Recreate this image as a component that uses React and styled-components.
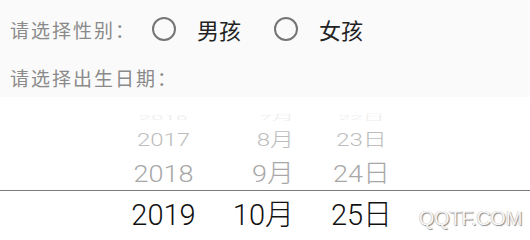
import React from "react";
import styled, { createGlobalStyle } from "styled-components";

const GlobalStyle = createGlobalStyle`
  html, body {
    margin: 0;
    padding: 0;
    background: #ffffff;
  }
  body {
    font-family: Roboto, "Noto Sans CJK SC", sans-serif;
  }
`;

const Screen = styled.div`
  width: 530px;
  height: 240px;
  overflow: hidden;
  position: relative;
`;

const Form = styled.div`
  background: #fafafa;
  padding: 0 10px;
  display: flex;
  flex-direction: column;
`;

const Row = styled.div`
  height: ${({ h }) => h}px;
  display: flex;
  align-items: center;
`;

const Label = styled.span`
  font-size: 19px;
  letter-spacing: 2px;
  color: #8a8a8a;
  white-space: nowrap;
`;

const RadioGroup = styled.div`
  display: flex;
  align-items: center;
  gap: 33px;
  margin-left: 16px;
`;

const RadioOption = styled.label`
  display: flex;
  align-items: center;
  gap: 21px;
  font-size: 22px;
  color: #222;
  cursor: pointer;
`;

const Circle = styled.span`
  width: 24px;
  height: 24px;
  box-sizing: border-box;
  border: 2.5px solid #757575;
  border-radius: 50%;
`;

const Picker = styled.div`
  position: relative;
  height: 143px;
  background: #ffffff;
  overflow: hidden;
  display: flex;
  padding-left: 114px;
`;

const Column = styled.div`
  width: 99px;
  display: flex;
  flex-direction: column;
  padding-top: 13px;
  align-items: ${({ align }) => (align === "right" ? "flex-end" : "center")};
  padding-right: ${({ align }) => (align === "right" ? "18px" : "0")};
  box-sizing: border-box;
`;

const Item = styled.div`
  height: ${({ h }) => h}px;
  line-height: ${({ h }) => h}px;
  font-size: ${({ size }) => size}px;
  font-weight: 300;
  color: ${({ color }) => color};
  transform: scaleY(${({ sy }) => sy});
  white-space: nowrap;
`;

const Divider = styled.div`
  position: absolute;
  left: 0;
  right: 0;
  top: 93px;
  height: 1px;
  background: #7a7a7a;
`;

const Watermark = styled.div`
  position: absolute;
  right: 8px;
  bottom: 10px;
  font-family: "Liberation Sans", Arial, sans-serif;
  font-size: 20px;
  color: #f6f6f6;
  text-shadow: 1px 1px 1px #8a8a8a, -0.5px -0.5px 0 #c8c8c8;
  letter-spacing: -0.3px;
`;

const rows = [
  { h: 16, size: 22, color: "#ececec", sy: 0.35 },
  { h: 29, size: 24, color: "#bdbdbd", sy: 0.78 },
  { h: 38, size: 27, color: "#a8a8a8", sy: 0.92 },
  { h: 44, size: 29, color: "#111111", sy: 1 },
];

const columns = [
  { key: "year", align: "center", values: ["2016", "2017", "2018", "2019"] },
  { key: "month", align: "right", values: ["7月", "8月", "9月", "10月"] },
  { key: "day", align: "center", values: ["22日", "23日", "24日", "25日"] },
];

export default function App() {
  return (
    <Screen>
      <GlobalStyle />
      <Form>
        <Row h={58}>
          <Label>请选择性别：</Label>
          <RadioGroup>
            <RadioOption>
              <Circle />
              男孩
            </RadioOption>
            <RadioOption>
              <Circle />
              女孩
            </RadioOption>
          </RadioGroup>
        </Row>
        <Row h={39}>
          <Label>请选择出生日期：</Label>
        </Row>
      </Form>
      <Picker>
        {columns.map((col) => (
          <Column key={col.key} align={col.align}>
            {col.values.map((v, i) => (
              <Item key={v} {...rows[i]}>
                {v}
              </Item>
            ))}
          </Column>
        ))}
        <Divider />
        <Watermark>QQTF.COM</Watermark>
      </Picker>
    </Screen>
  );
}
